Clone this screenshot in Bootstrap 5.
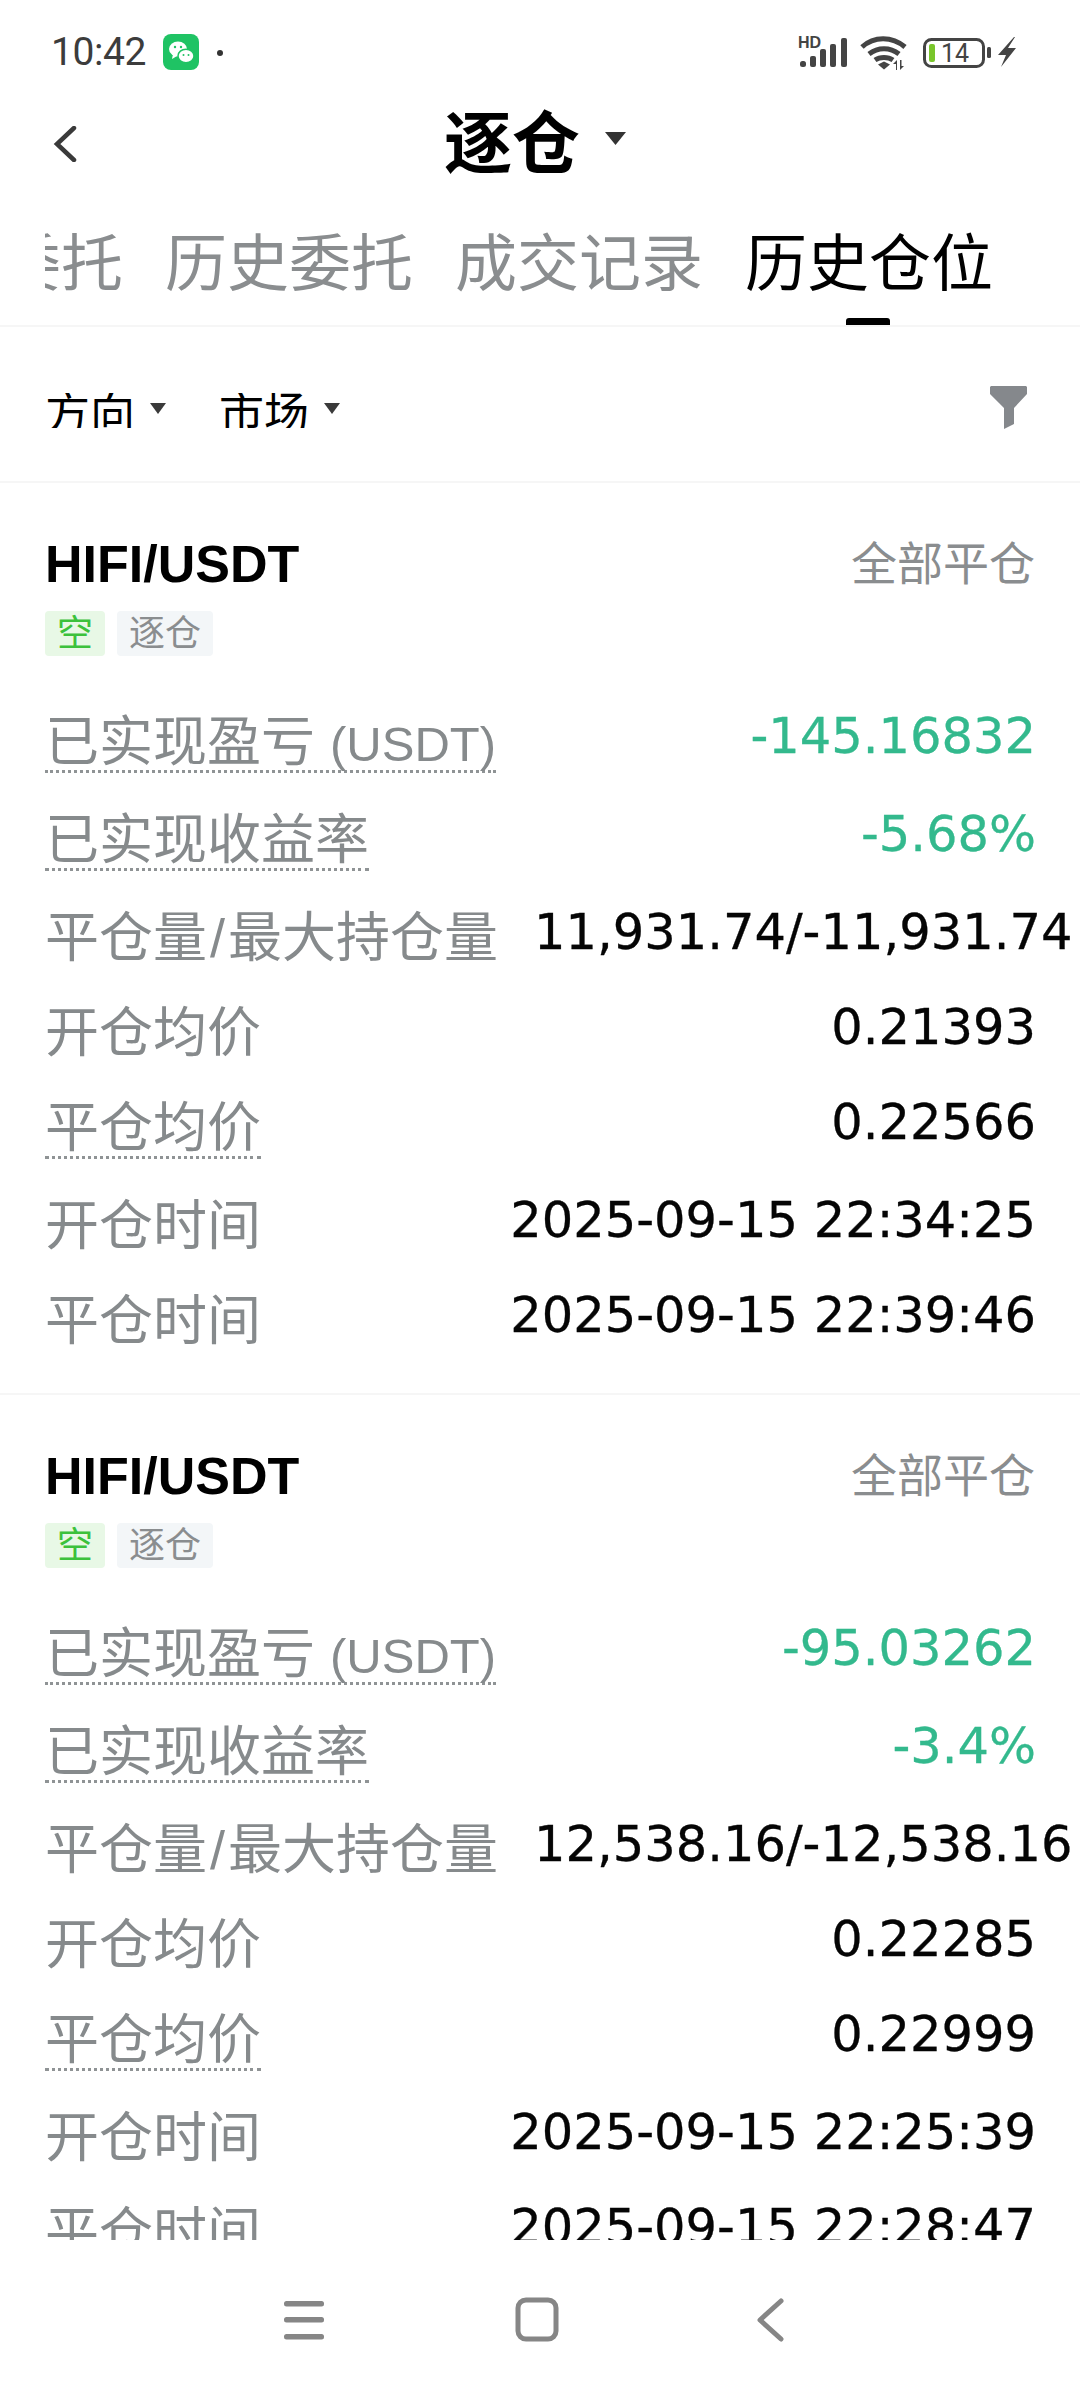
<!doctype html>
<html lang="zh-CN">
<head>
<meta charset="utf-8">
<title>逐仓</title>
<link href="https://cdn.jsdelivr.net/npm/bootstrap@5.3.0/dist/css/bootstrap.min.css" rel="stylesheet">
<style>
html,body{margin:0;background:#fff}
body{font-family:"Liberation Sans","Noto Sans CJK SC",sans-serif;width:1080px;height:2400px;overflow:hidden}
.app-frame{height:2400px;width:1080px}
.status-strip{height:88px;padding:34px 60px 0 51px;flex:none}
.clock{font-family:Roboto,"Liberation Sans",sans-serif;font-size:39px;line-height:36px;color:#3c3c3c;width:112px;letter-spacing:-.4px}
.dot-mark{width:6px;height:6px;background:#333;border-radius:50%;margin-left:18px}
.title-strip{height:112px;flex:none;padding-left:53px;padding-right:53px}
.side-slot{width:60px;flex:none}
.page-title{font-size:68px;font-weight:700;line-height:80px;color:#000;margin-left:-10px}
.title-caret{width:21px;height:13px;margin-left:25px;margin-bottom:12px}
.tab-strip{height:127px;flex:none;border-bottom:2px solid #f6f6f6}
.tab-clip{margin-left:45px;height:125px;overflow:hidden}
.tab-inner{margin-left:-170px;gap:42px;padding-top:25px}
.tab-item{font-size:62px;line-height:80px;color:#8a8d8f;white-space:nowrap;flex:none}
.tab-item.on{color:#000;position:relative}
.tab-mark{position:absolute;left:101px;top:93px;width:44px;height:8px;border-radius:3px 3px 0 0;background:#000}
.filter-strip{height:156px;flex:none;padding:66px 53px 0 45px;border-bottom:2px solid #f6f6f6}
.filter-clip{height:35px;overflow:hidden;font-size:45px;line-height:52px;color:#000;white-space:nowrap}
.filter-clip span{display:block;margin-top:-4px}
.filter-caret{width:16px;height:11px;margin-left:15px;margin-top:10px}
.filter-gap{width:53px}
.filter-icon{margin-top:-7px}
.scroll-area{height:1757px;flex:none;overflow:hidden}
.pos-card{height:912px;padding:51px 45px 0 45px;border-bottom:2px solid #f6f6f6;flex:none}
.pair-name{font-size:52px;font-weight:700;line-height:60px;color:#000}
.close-kind{font-size:46px;line-height:60px;color:#8a8d8f}
.tag-row{gap:12px;margin-top:17px;margin-bottom:50px}
.tag-chip{font-size:36px;line-height:45px;height:45px;padding:0 12px;border-radius:4px}
.tag-short{background:#e8f8e6;color:#3cc13c}
.tag-mode{background:#f3f6f8;color:#8a8d8f}
.data-row{height:95px;gap:36px;white-space:nowrap}
.data-row.tall{height:98px}
.data-name{font-size:54px;line-height:72px;color:#868a8c;flex:none}
.data-name.dotted{height:67px;border-bottom:3px dotted #8f9395}
.data-name em{font-style:normal;font-size:49px}
.data-name i{font-style:normal;margin:0 3px}
.data-val{font-family:"DejaVu Sans",sans-serif;font-size:49.5px;line-height:60px;color:#050505;flex:none;margin-right:-1px;-webkit-text-stroke:.3px currentColor}
.data-val.down{color:#33b98d}
.soft-nav{height:160px;flex:none;background:#fff}
.soft-nav svg{display:block}
</style>
</head>
<body>
<div class="app-frame d-flex flex-column">
  <div class="status-strip d-flex align-items-start">
    <div class="clock">10:42</div>
    <svg width="36" height="36" viewBox="0 0 36 36" class="flex-none" aria-hidden="true">
      <rect width="36" height="36" rx="8" fill="#1fc364"/>
      <ellipse cx="15" cy="15" rx="9" ry="7.500" fill="#fff"/>
      <path d="M10 20l-1 5 5-3z" fill="#fff"/>
      <ellipse cx="23" cy="22" rx="8" ry="6.800" fill="#fff" stroke="#1fc364" stroke-width="1.500"/>
      <circle cx="12" cy="13" r="1.200" fill="#1fc364"/><circle cx="18" cy="13" r="1.200" fill="#1fc364"/>
      <circle cx="20.500" cy="21" r="1" fill="#1fc364"/><circle cx="25.500" cy="21" r="1" fill="#1fc364"/>
    </svg>
    <div class="dot-mark mt-3"></div>
    <div class="flex-grow-1"></div>
    <svg width="225" height="40" viewBox="795 34 225 40" aria-hidden="true">
      <text x="798" y="48" font-family="Liberation Sans" font-weight="700" font-size="16" fill="#444">HD</text>
      <g fill="#444">
        <rect x="800" y="61" width="6" height="6" rx="2.500"/>
        <rect x="810" y="56" width="6" height="11" rx="2"/>
        <rect x="820" y="49" width="6" height="18" rx="2"/>
        <rect x="830" y="44" width="6" height="23" rx="2"/>
        <rect x="841" y="38" width="6" height="29" rx="2"/>
      </g>
      <g fill="none" stroke="#444" stroke-width="5">
        <path d="M862 47c12-11 30-11 43 0"/>
        <path d="M869 54c9-7 21-7 30 0"/>
        <path d="M875 60c5-3.500 13-3.500 18 0"/>
      </g>
      <path d="M878 64.500l6-3 6 3-6 5z" fill="#444"/>
      <path d="M896 70v-6h-3l4-4v10zM900 60v10l4-4h-2.500v-6z" fill="#444"/>
      <rect x="924.500" y="39.500" width="59" height="27" rx="7" fill="none" stroke="#444" stroke-width="3"/>
      <rect x="929" y="44" width="6" height="18" rx="2" fill="#79c52b"/>
      <text x="941" y="62" font-family="Roboto" font-size="25" fill="#444">14</text>
      <rect x="987" y="47" width="4" height="11" rx="1.500" fill="#444"/>
      <path d="M1014 37l-16 18h8l-5 12 15-19h-8l7-11z" fill="#444"/>
    </svg>
  </div>
  <div class="title-strip d-flex align-items-center">
    <div class="side-slot">
      <svg width="24" height="36" viewBox="0 0 24 36" class="d-block" aria-hidden="true"><path d="M21 2L4 18l17 16" fill="none" stroke="#3a3a3a" stroke-width="4.500" stroke-linecap="round"/></svg>
    </div>
    <div class="flex-grow-1 d-flex justify-content-center align-items-center">
      <div class="page-title">逐仓</div>
      <svg class="title-caret" viewBox="0 0 21 13" aria-hidden="true"><path d="M0 0h21L10.500 13z" fill="#333"/></svg>
    </div>
    <div class="side-slot"></div>
  </div>
  <div class="tab-strip">
    <div class="tab-clip">
      <div class="tab-inner d-flex">
        <div class="tab-item">当前委托</div>
        <div class="tab-item">历史委托</div>
        <div class="tab-item">成交记录</div>
        <div class="tab-item on">历史仓位<span class="tab-mark"></span></div>
      </div>
    </div>
  </div>
  <div class="filter-strip d-flex align-items-start">
    <div class="filter-clip"><span>方向</span></div>
    <svg class="filter-caret" viewBox="0 0 16 11" aria-hidden="true"><path d="M0 0h16L8 11z" fill="#3a3a3a"/></svg>
    <div class="filter-gap"></div>
    <div class="filter-clip"><span>市场</span></div>
    <svg class="filter-caret" viewBox="0 0 16 11" aria-hidden="true"><path d="M0 0h16L8 11z" fill="#3a3a3a"/></svg>
    <div class="flex-grow-1"></div>
    <svg width="37" height="43" viewBox="0 0 37 43" class="filter-icon" aria-hidden="true"><path d="M1 0h35l1 1v7L24 22v16l-10 5V22L0 8V1z" fill="#85888c"/></svg>
  </div>
  <div class="scroll-area">
    <div class="pos-card">
      <div class="d-flex justify-content-between align-items-center">
        <div class="pair-name">HIFI/USDT</div><div class="close-kind">全部平仓</div>
      </div>
      <div class="tag-row d-flex">
        <div class="tag-chip tag-short">空</div><div class="tag-chip tag-mode">逐仓</div>
      </div>
      <div class="data-row tall d-flex justify-content-between"><div class="data-name dotted">已实现盈亏 <em>(USDT)</em></div><div class="data-val down">-145.16832</div></div>
      <div class="data-row tall d-flex justify-content-between"><div class="data-name dotted">已实现收益率</div><div class="data-val down">-5.68%</div></div>
      <div class="data-row d-flex justify-content-between"><div class="data-name">平仓量<i>/</i>最大持仓量</div><div class="data-val">11,931.74/-11,931.74</div></div>
      <div class="data-row d-flex justify-content-between"><div class="data-name">开仓均价</div><div class="data-val">0.21393</div></div>
      <div class="data-row tall d-flex justify-content-between"><div class="data-name dotted">平仓均价</div><div class="data-val">0.22566</div></div>
      <div class="data-row d-flex justify-content-between"><div class="data-name">开仓时间</div><div class="data-val">2025-09-15 22:34:25</div></div>
      <div class="data-row d-flex justify-content-between"><div class="data-name">平仓时间</div><div class="data-val">2025-09-15 22:39:46</div></div>
    </div>
    <div class="pos-card">
      <div class="d-flex justify-content-between align-items-center">
        <div class="pair-name">HIFI/USDT</div><div class="close-kind">全部平仓</div>
      </div>
      <div class="tag-row d-flex">
        <div class="tag-chip tag-short">空</div><div class="tag-chip tag-mode">逐仓</div>
      </div>
      <div class="data-row tall d-flex justify-content-between"><div class="data-name dotted">已实现盈亏 <em>(USDT)</em></div><div class="data-val down">-95.03262</div></div>
      <div class="data-row tall d-flex justify-content-between"><div class="data-name dotted">已实现收益率</div><div class="data-val down">-3.4%</div></div>
      <div class="data-row d-flex justify-content-between"><div class="data-name">平仓量<i>/</i>最大持仓量</div><div class="data-val">12,538.16/-12,538.16</div></div>
      <div class="data-row d-flex justify-content-between"><div class="data-name">开仓均价</div><div class="data-val">0.22285</div></div>
      <div class="data-row tall d-flex justify-content-between"><div class="data-name dotted">平仓均价</div><div class="data-val">0.22999</div></div>
      <div class="data-row d-flex justify-content-between"><div class="data-name">开仓时间</div><div class="data-val">2025-09-15 22:25:39</div></div>
      <div class="data-row d-flex justify-content-between"><div class="data-name">平仓时间</div><div class="data-val">2025-09-15 22:28:47</div></div>
    </div>
  </div>
  <div class="soft-nav d-flex justify-content-center align-items-center">
    <svg width="540" height="160" viewBox="270 2240 540 160" aria-hidden="true">
      <g fill="#868686"><rect x="284" y="2301" width="40" height="5.500" rx="2.500"/><rect x="284" y="2317" width="40" height="5.500" rx="2.500"/><rect x="284" y="2334" width="40" height="5.500" rx="2.500"/></g>
      <rect x="518" y="2300" width="38" height="39" rx="8" fill="none" stroke="#868686" stroke-width="5"/>
      <path d="M781 2301l-21 19 21 19" fill="none" stroke="#868686" stroke-width="5" stroke-linecap="round" stroke-linejoin="round"/>
    </svg>
  </div>
</div>
<script src="https://cdn.jsdelivr.net/npm/bootstrap@5.3.0/dist/js/bootstrap.bundle.min.js"></script>
</body>
</html>
